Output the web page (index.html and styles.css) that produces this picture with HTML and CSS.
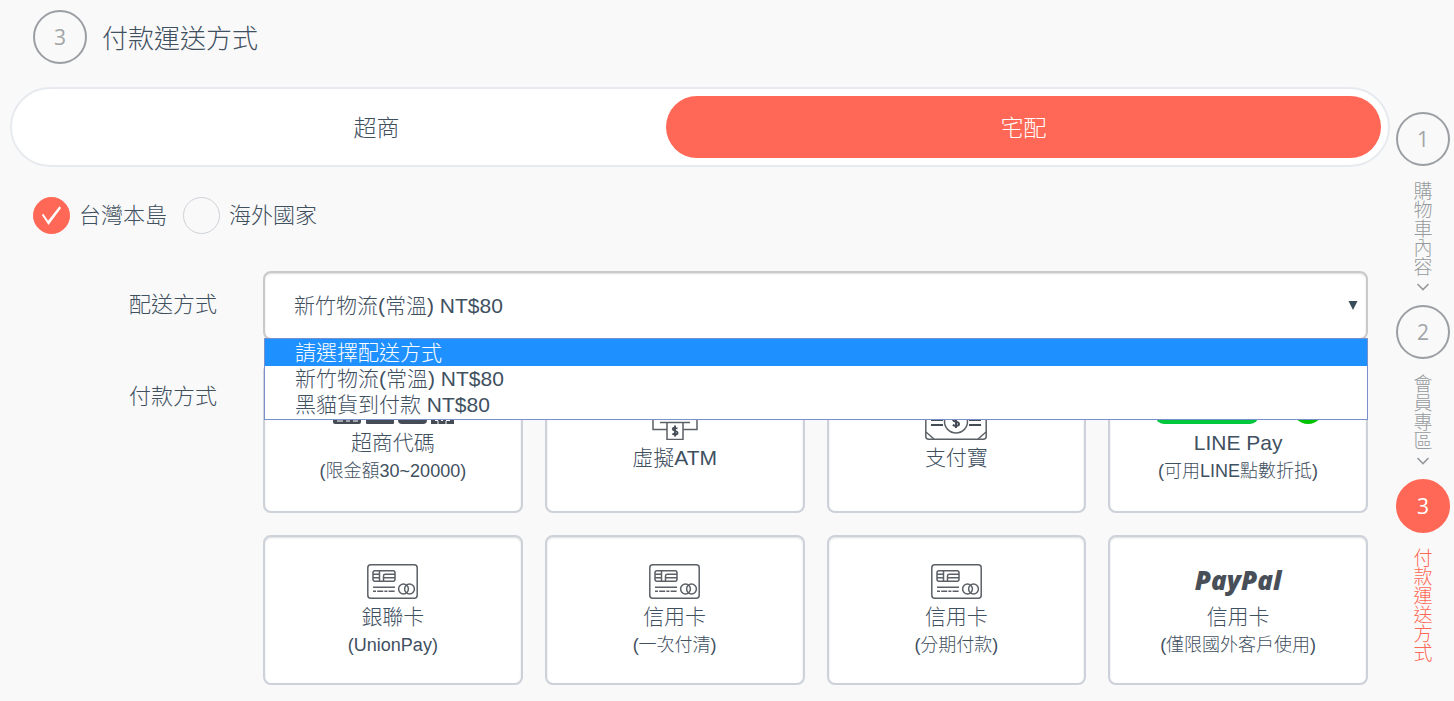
FILE: index.html
```html
<!DOCTYPE html>
<html lang="zh-Hant">
<head>
<meta charset="utf-8">
<meta name="viewport" content="width=device-width, initial-scale=1">
<title>付款運送方式</title>
<link rel="stylesheet" href="styles.css">
</head>
<body>
<svg class="defs" aria-hidden="true">
  <symbol id="card" viewBox="0 0 51 35">
    <g fill="none" stroke="#5b6067" stroke-width="1.5">
      <rect x=".8" y=".8" width="49.4" height="33.4" rx="3"/>
      <rect x="6" y="6.7" width="22" height="10.6" rx="2"/>
      <path d="M12.5 6.7v10.6M6 10.3h6.500M6 13.700h6.500M12.500 6.700M28 10.300H18.200q-1.700 0-1.700 1.700v5.300M16.500 13.700H28M6 23.300h22"/>
      <path d="M6 27.300h22" stroke-dasharray="3 1.200 6 1.200"/>
      <circle cx="36.500" cy="25" r="4.900"/><circle cx="42.500" cy="25" r="4.900"/>
    </g>
  </symbol>
</svg>
<div class="page">
  <main class="main">
    <header class="head">
      <span class="step">3</span>
      <h1 class="title">付款運送方式</h1>
    </header>
    <div class="tabs" role="tablist">
      <button class="tab" type="button" role="tab" aria-selected="false">超商</button>
      <button class="tab tab-active" type="button" role="tab" aria-selected="true">宅配</button>
    </div>
    <div class="regions">
      <label class="region"><input class="radio" type="radio" name="region" checked>台灣本島</label>
      <label class="region"><input class="radio" type="radio" name="region">海外國家</label>
    </div>
    <div class="form">
      <label class="label" for="delivery">配送方式</label>
      <div class="dropdown">
        <select class="select" id="delivery">
          <option>請選擇配送方式</option>
          <option selected>新竹物流(常溫) NT$80</option>
          <option>黑貓貨到付款 NT$80</option>
        </select>
        <svg class="arrow" width="10" height="9" viewBox="0 0 10 9" aria-hidden="true"><path d="M.5 0h9L5 9z" fill="#3b4c59"/></svg>
        <ul class="menu" role="listbox" aria-label="配送方式">
          <li class="item item-active" role="option" aria-selected="true">請選擇配送方式</li>
          <li class="item" role="option">新竹物流(常溫) NT$80</li>
          <li class="item" role="option">黑貓貨到付款 NT$80</li>
        </ul>
      </div>
      <span class="label" id="payment">付款方式</span>
      <div class="cards" role="group" aria-labelledby="payment">
        <button class="card" type="button">
          <svg class="icon" width="122" height="32" viewBox="0 0 122 32" aria-hidden="true">
            <g fill="#454c55"><rect x="1" y="3" width="28" height="28" rx="2"/><rect x="34" y="3" width="28" height="28" rx="1"/><rect x="66" y="3" width="29" height="28" rx="4"/><rect x="99" y="3" width="23" height="28"/></g>
            <path d="M5 28h6m3 0h4m3 0h5M103 27.500h3m3 0h2m3 0h4M106 31v-3m8 3v-3" stroke="#fff" stroke-width="1"/>
          </svg>
          <span class="name">超商代碼</span><span class="note">(限金額30~20000)</span>
        </button>
        <button class="card" type="button">
          <svg class="icon" width="48" height="38" viewBox="0 0 48 38" aria-hidden="true">
            <g fill="none" stroke="#5b6067" stroke-width="1.500"><path d="M16 27.500H2V2h44v25.500H32M9 20.500h30M16 20.500v17h16v-17"/></g>
            <path d="M26.500 26.500q-4.500-2-4.800.5c0 2.300 4.900 1.300 4.900 3.800 0 2.200-3.200 2-5.200.8M24 23.500v11" fill="none" stroke="#454c55" stroke-width="1.900"/>
          </svg>
          <span class="name">虛擬ATM</span>
        </button>
        <button class="card" type="button">
          <svg class="icon" width="62" height="38" viewBox="0 0 62 38" aria-hidden="true">
            <g fill="none" stroke="#5b6067" stroke-width="1.500"><rect x=".8" y=".8" width="60.400" height="36.400" rx="3"/><circle cx="31" cy="19.500" r="11.500"/><path d="M1 30l8 7M61 30l-8 7M1 9l8-8M61 9l-8-8"/></g>
            <path d="M6 13h12m26 0h12M6 18h12m26 0h12M6 23h12m26 0h12" stroke="#454c55" stroke-width="2"/>
            <path d="M34 17q-5.500-2.500-6 .5c0 3 6 1.500 6 4.500 0 2.500-4 2.200-6.200.8M31 13v13" fill="none" stroke="#454c55" stroke-width="2"/>
          </svg>
          <span class="name">支付寶</span>
        </button>
        <button class="card" type="button">
          <svg class="icon" width="166" height="32" viewBox="0 0 166 32" aria-hidden="true">
            <rect x="0" y="0" width="104" height="31" rx="9" fill="#00c73c"/><circle cx="153" cy="15" r="16" fill="#00c300"/>
          </svg>
          <span class="name">LINE Pay</span><span class="note">(可用LINE點數折抵)</span>
        </button>
        <button class="card" type="button">
          <svg class="icon" width="51" height="35" aria-hidden="true"><use href="#card"/></svg>
          <span class="name">銀聯卡</span><span class="note">(UnionPay)</span>
        </button>
        <button class="card" type="button">
          <svg class="icon" width="51" height="35" aria-hidden="true"><use href="#card"/></svg>
          <span class="name">信用卡</span><span class="note">(一次付清)</span>
        </button>
        <button class="card" type="button">
          <svg class="icon" width="51" height="35" aria-hidden="true"><use href="#card"/></svg>
          <span class="name">信用卡</span><span class="note">(分期付款)</span>
        </button>
        <button class="card" type="button">
          <span class="icon paypal">PayPal</span>
          <span class="name">信用卡</span><span class="note">(僅限國外客戶使用)</span>
        </button>
      </div>
    </div>
  </main>
  <nav class="rail" aria-label="結帳步驟">
    <span class="step">1</span>
    <span class="rail-text">購物車內容</span>
    <svg class="chevron" width="14" height="8" viewBox="0 0 14 8" aria-hidden="true"><path d="M1.500 1L7 6.500 12.500 1" fill="none" stroke="#96999d" stroke-width="1.600"/></svg>
    <span class="step">2</span>
    <span class="rail-text">會員專區</span>
    <svg class="chevron" width="14" height="8" viewBox="0 0 14 8" aria-hidden="true"><path d="M1.500 1L7 6.500 12.500 1" fill="none" stroke="#96999d" stroke-width="1.600"/></svg>
    <span class="step step-active">3</span>
    <span class="rail-text rail-active">付款運送方式</span>
  </nav>
</div>
</body>
</html>
```
FILE: styles.css
```css
* { box-sizing: border-box; }
body {
  margin: 0;
  background: #f9f9f9;
  color: #3f505f;
  font-family: "Liberation Sans", "Noto Sans CJK TC", sans-serif;
  font-weight: 300;
}
button, select, input { font: inherit; color: inherit; margin: 0; }
.defs { display: none; }
.page { display: flex; gap: 6px; padding: 10px 4px 16px 10px; }
.main { flex: 1; min-width: 0; }
.head { display: flex; align-items: center; gap: 15px; padding-left: 23px; }
.title { margin: 0; padding-top: 4px; font-size: 26px; line-height: 50px; font-weight: 300; }
.step {
  display: flex;
  align-items: center;
  justify-content: center;
  flex: none;
  width: 54px;
  height: 54px;
  border: 2px solid #9b9fa4;
  border-radius: 50%;
  color: #a2a5a8;
  font: 400 21px "Open Sans", sans-serif;
}
.step-active { background: #ff6856; border-color: #ff6856; color: #fff; }
.tabs {
  display: flex;
  margin-top: 23px;
  padding: 7px;
  background: #fff;
  border: 2px solid #e7ebef;
  border-radius: 40px;
}
.tab {
  flex: none;
  width: 52.5%;
  height: 62px;
  padding: 0 0 2px;
  border: 0;
  border-radius: 31px;
  background: none;
  font-size: 23px;
}
.tab-active { margin-left: -5%; background: #ff6856; color: #fff; }
.regions { display: flex; gap: 16px; padding: 30px 23px 0; }
.region { display: flex; align-items: center; gap: 9px; font-size: 22px; line-height: 37px; }
.radio {
  appearance: none;
  width: 37px;
  height: 37px;
  border: 1px solid #cdd2d7;
  border-radius: 50%;
  display: grid;
  place-items: center;
}
.radio:checked { background: #ff6856; border-color: #ff6856; }
.radio:checked::before {
  content: "";
  width: 20px;
  height: 20px;
  background: #fff;
  clip-path: polygon(2% 47%, 9% 41%, 33% 76%, 90% 4%, 98% 12%, 35% 98%);
}
.form {
  display: grid;
  grid-template-columns: 207px 1fr;
  gap: 23px 46px;
  padding: 37px 22px 0 0;
}
.label { text-align: right; font-size: 22px; line-height: 67px; }
.dropdown { position: relative; min-width: 0; }
.select {
  appearance: none;
  display: block;
  width: 100%;
  height: 69px;
  padding: 0 29px;
  border: 2px solid #c9c9c9;
  border-radius: 8px;
  background: #fff;
  box-shadow: inset 0 1px 2px #0002;
  font-size: 21px;
}
.arrow { position: absolute; right: 10px; top: 30px; }
.menu {
  position: absolute;
  z-index: 1;
  top: 67px;
  left: 1px;
  right: 0;
  margin: 0;
  padding: 0 0 1px;
  list-style: none;
  background: #fff;
  border: 1px solid #7890cb;
  font-size: 21px;
}
.item { padding-left: 30px; line-height: 26px; }
.item-active { padding-top: 1px; background: #1e90ff; color: #fff; }
.cards { display: grid; grid-template-columns: repeat(4, 1fr); gap: 22px; }
.card {
  display: flex;
  flex-direction: column;
  align-items: center;
  justify-content: center;
  height: 150px;
  padding: 0;
  border: 2px solid #cdd1d9;
  border-radius: 8px;
  background: #fff;
  box-shadow: inset 0 1px 2px #0002;
}
.icon { display: block; margin-bottom: 2px; }
.paypal { color: #484f58; font: italic 800 26px/33px "Open Sans", sans-serif; padding-bottom: 2px; }
.name { font-size: 21px; line-height: 32px; }
.note { font-size: 18px; line-height: 24px; }
.rail { display: flex; flex-direction: column; align-items: center; width: 54px; padding-top: 102px; }
.rail-text {
  margin-top: 15px;
  padding-right: 5px;
  writing-mode: vertical-rl;
  color: #96999d;
  font-size: 19px;
  line-height: 24px;
}
.chevron { margin: 7px 0 14px; }
.rail-active { color: #ff6856; }
```
